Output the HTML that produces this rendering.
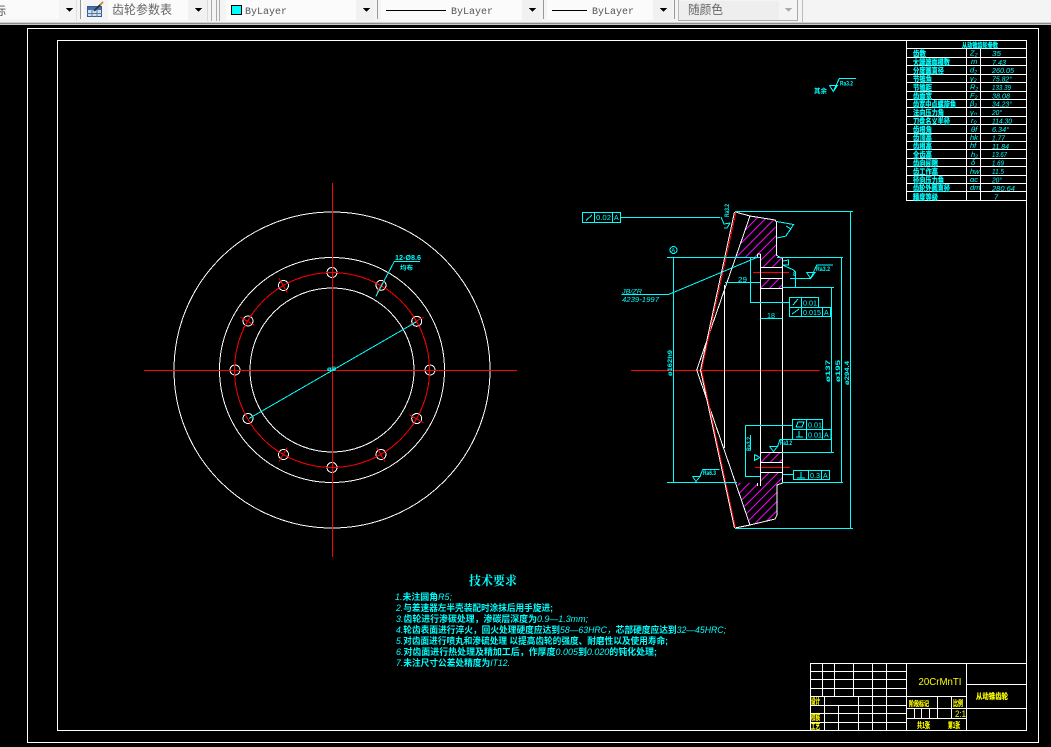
<!DOCTYPE html>
<html><head><meta charset="utf-8">
<style>
html,body{margin:0;padding:0;width:1051px;height:747px;overflow:hidden;background:#000}
svg{position:absolute;left:0;top:0;display:block}
text{font-family:"Liberation Sans","Noto Sans CJK SC",sans-serif}
.m{font-family:"Liberation Mono","Noto Sans CJK SC",monospace}
.s{font-family:"Noto Serif CJK SC","Liberation Serif",serif}
.c{fill:#0ff;font-size:8px}
.b{font-weight:700}
.y{fill:#ff0;font-size:8px;font-weight:700;stroke:#ff0;stroke-width:.2px}
.l{font-weight:400;font-style:italic;stroke:none}
</style></head><body>
<svg width="1051" height="747" viewBox="0 0 1051 747" xmlns="http://www.w3.org/2000/svg">
<defs>
<pattern id="h" width="6.500" height="6.500" patternUnits="userSpaceOnUse" patternTransform="rotate(-45)">
<rect width="6.500" height="1" fill="#f0f"/></pattern>
</defs>
<rect width="1051" height="747" fill="#000"/>

<!-- toolbar -->
<rect width="1051" height="22" fill="#f4f4f4"/>
<rect y="22" width="1051" height="1" fill="#d0d0d0"/>
<rect y="23" width="1051" height="1" fill="#8c8c8c"/>
<rect y="24" width="1051" height="1" fill="#c8c8c8"/>
<g shape-rendering="crispEdges">
<rect x="0" y="0" width="59" height="19" fill="#fafafa"/>
<rect x="76" y="0" width="1" height="21" fill="#e0e0e0"/>
<rect x="80" y="0" width="1" height="19" fill="#999"/>
<rect x="82" y="0" width="1" height="19" fill="#fff"/>
<rect x="108" y="0" width="99" height="20" fill="#fbfbfb"/>
<rect x="188" y="0" width="19" height="20" fill="#f1f1f1"/>
<rect x="207" y="0" width="1" height="21" fill="#d8d8d8"/>
<rect x="211" y="0" width="1" height="21" fill="#aaa"/>
<rect x="216" y="0" width="1" height="21" fill="#aaa"/>
<rect x="219" y="0" width="1" height="21" fill="#aaa"/>
<rect x="226" y="0" width="148" height="20" fill="#fbfbfb"/>
<rect x="356" y="0" width="18" height="20" fill="#f1f1f1"/>
<rect x="377" y="0" width="1" height="19" fill="#999"/>
<rect x="381" y="0" width="159" height="20" fill="#fbfbfb"/>
<rect x="522" y="0" width="18" height="20" fill="#f1f1f1"/>
<rect x="543" y="0" width="1" height="19" fill="#999"/>
<rect x="547" y="0" width="125" height="20" fill="#fbfbfb"/>
<rect x="653" y="0" width="19" height="20" fill="#f1f1f1"/>
<rect x="674" y="0" width="1" height="19" fill="#999"/>
<rect x="678" y="0" width="1" height="20" fill="#bbb"/>
<rect x="678" y="20" width="120" height="1" fill="#aaa"/>
<rect x="797" y="0" width="1" height="20" fill="#aaa"/>
<rect x="679" y="1" width="100" height="19" fill="#eee"/>
<rect x="802" y="0" width="1" height="22" fill="#bbb"/>
<!-- swatch -->
<rect x="231.500" y="5.500" width="10" height="9" fill="#0ff" stroke="#000"/>
<!-- lines -->
<rect x="386" y="10" width="60" height="1" fill="#000"/>
<rect x="552" y="10" width="35" height="1" fill="#000"/>
<!-- arrows -->
<polygon points="66,8 73,8 69.500,12" fill="#000"/>
<polygon points="195,8 202,8 198.500,12" fill="#000"/>
<polygon points="363,8 370,8 366.500,12" fill="#000"/>
<polygon points="529,8 536,8 532.500,12" fill="#000"/>
<polygon points="660,8 667,8 663.500,12" fill="#000"/>
<polygon points="785,8 792,8 788.500,12" fill="#aaa"/>
<!-- table icon -->
<rect x="87.500" y="6.500" width="14" height="10" fill="#cfe0f2" stroke="#3a5a8c"/>
<rect x="88" y="7" width="13" height="3" fill="#3f6fb0"/>
<path d="M87 13.500H102M92 7V17M97 7V17" stroke="#5a7aa8" fill="none"/>
<path d="M94 11L102 3" stroke="#333" stroke-width="2"/>
<path d="M100 5L103 2" stroke="#c98a2a" stroke-width="2"/>
</g>
<text x="-6" y="15" font-size="12" fill="#555">标</text>
<text x="112" y="14" font-size="12.500" fill="#666" textLength="60" lengthAdjust="spacingAndGlyphs">齿轮参数表</text>
<text class="m" x="245" y="14" font-size="10" fill="#555">ByLayer</text>
<text class="m" x="451" y="14" font-size="10" fill="#555">ByLayer</text>
<text class="m" x="592" y="14" font-size="10" fill="#555">ByLayer</text>
<text x="688" y="14" font-size="12.500" fill="#666" textLength="35" lengthAdjust="spacingAndGlyphs">随颜色</text>

<g shape-rendering="crispEdges" fill="none" stroke="#fff">
<!-- frames -->
<rect x="27.500" y="28.500" width="1011" height="714"/>
<rect x="57.500" y="40.500" width="969" height="690"/>

<!-- front view -->
<circle cx="332" cy="370" r="158"/>
<circle cx="332" cy="370" r="112.500"/>
<circle cx="332" cy="370" r="82"/>
<g>
<circle cx="430" cy="370" r="5"/><circle cx="416.700" cy="321.300" r="5"/><circle cx="381" cy="285.300" r="5"/><circle cx="332" cy="272.500" r="5"/><circle cx="283.500" cy="285.500" r="5"/><circle cx="248" cy="321" r="5"/><circle cx="235" cy="370" r="5"/><circle cx="248" cy="418.500" r="5"/><circle cx="283.500" cy="454.500" r="5"/><circle cx="332" cy="467.500" r="5"/><circle cx="381" cy="454.500" r="5"/><circle cx="416.700" cy="418.500" r="5"/>
</g>
</g>
<g shape-rendering="crispEdges" fill="none" stroke="#f00">
<circle cx="332" cy="370" r="97.500"/>
<path d="M144 370.500H517M332.500 183V557"/>
<path d="M631 370.500H820"/>
<path d="M753 272.500H789M755 467.500H790"/>
<path d="M409.500 325.250L423.300 317.250M412.400 314.350L420.400 328.150"/>
<path d="M376.750 292.500L384.750 278.700M373.850 281.600L387.650 289.600"/>
<path d="M287.250 292.500L279.250 278.700M276.350 289.600L290.150 281.600"/>
<path d="M254.500 325.250L240.700 317.250M243.600 328.150L251.600 314.350"/>
<path d="M409.500 414.750L423.300 422.750M420.400 411.850L412.400 425.650"/>
<path d="M376.750 447.500L384.750 461.300M387.650 450.400L373.850 458.400"/>
<path d="M287.250 447.500L279.250 461.300M276.350 450.400L290.150 458.400"/>
</g>

<!-- side view hatching -->
<g shape-rendering="crispEdges">
<polygon fill="url(#h)" points="750,216 775,220 776.700,255 782.500,258 782.500,267 760.500,267 760.500,254 757,254 757,258 736.700,258"/>
<rect fill="url(#h)" x="760.500" y="278" width="22" height="10"/>
<rect fill="url(#h)" x="760.500" y="452" width="22" height="10"/>
<polygon fill="url(#h)" points="750,525 775,519 776.700,515 776.700,485 782.300,483 782.300,473 760.300,473 760.300,486 757.300,486 757.300,483 737,483"/>
</g>
<g shape-rendering="crispEdges" fill="none" stroke="#fff">
<path d="M734.500 212L700.500 370L734.500 528"/>
<path d="M735 212L750 216L775 220L776.500 222L776.500 255L779 257L782.500 258V483L777 485V515L775 519L750 525L735 528"/>
<path d="M750 216L696.700 370L750 525"/>
<path d="M724.500 285V448M760.500 254V486M757.500 254H760.500M757.500 254V258M757.500 486V483"/>
<path d="M760.500 267.500H782.500M760.500 278.500H782.500M760.500 288.500H782.500M760.500 452.500H782.500M760.500 462.500H782.500M760.500 472.500H782.500"/>
</g>
<path shape-rendering="crispEdges" fill="none" stroke="#f00" d="M736 212L701.500 370L735.500 528"/>

<!-- cyan annotations -->
<g shape-rendering="crispEdges" fill="none" stroke="#0ff">
<path d="M249 418.500L416.700 321.700"/>
<path d="M375.700 296.700L394.300 261.500H420"/>
<!-- top FCF -->
<rect x="582.500" y="212.500" width="38" height="10"/>
<path d="M594.500 212.500V222.500M612.500 212.500V222.500M620.500 217.500H720M586 220.500L592 215"/>
<!-- dims -->
<path d="M735 211.500H853M850.500 212V528M735 528.500H853"/>
<path d="M777 257.500H843M841.500 258V482M782 482.500H843"/>
<path d="M782.500 287.500H834M831.500 288V452M782 452.500H834"/>
<path d="M667 257.500H760M673.500 257V482M667 482.500H737"/>
<circle cx="673.500" cy="250" r="3.500"/>
<path d="M621.500 294.500H668.500L758 257"/>
<path d="M725 282.500H760M760.500 318.500H782.500"/>
<!-- FCF 2 -->
<rect x="789.500" y="297.500" width="29" height="10"/>
<rect x="789.500" y="307.500" width="41" height="9"/>
<path d="M801.500 297.500V316.500M822.500 307.500V316.500M750.500 258V302.500H789.500M793 305L798 299M792 314L799 309"/>
<!-- surface right -->
<path d="M806.500 272.500H815L810.700 278.500L806.500 272.500M810.700 278.500L816.700 265H833M790 278.500H810.700"/>
<path d="M783 261L788.500 260V265H783M782.700 265L793.500 270L795.500 272V287.500"/>
<path d="M776.700 221.500L793.500 224.500L786 236L777 238M786 226L791 229L787 234"/>
<!-- tip mark -->
<path d="M721 217L724 224L730 223L727 228H724"/>
<!-- lower FCF -->
<rect x="792.500" y="419.500" width="30" height="10"/>
<rect x="792.500" y="429.500" width="38.500" height="10"/>
<path d="M806.500 419.500V439.500M822.500 429.500V439.500M745.500 425.500H792.500M745.500 425.500V476.500H760M796 427L798 422H804L802 427H796M799 431V437M796 437H803"/>
<path d="M754.500 454.500L760 457.500L754.500 460.500V454.500M769.500 446.500H777.500L773.500 451.500L769.500 446.500M777.500 446.500L780 439.500H792.500"/>
<rect x="793.500" y="470.500" width="36" height="9"/>
<path d="M808.500 470.500V479.500M821.500 470.500V479.500M782.500 474.500H793.500M801 472V478M797 478H805"/>
<path d="M692.500 476.500H700L696 481.500L692.500 476.500M700 476.500L702.700 469.500H719.500"/>
<!-- top note surface -->
<path d="M829.500 85.500H837.500L833.300 91.500L829.500 85.500M833.300 91.500L839.300 78.500H856"/>
</g>
<rect x="750" y="435" width="1" height="15" fill="#0ff"/>
<!-- cyan text -->
<text class="c" x="622" y="293.500" style="font-size:6px" textLength="20" lengthAdjust="spacingAndGlyphs" font-style="italic">JB/ZR</text>
<text class="c" x="622" y="302" style="font-size:7.500px" textLength="37" lengthAdjust="spacingAndGlyphs" font-style="italic">4239-1997</text>
<text class="c" x="596" y="220" style="font-size:7px" textLength="15" lengthAdjust="spacingAndGlyphs">0.02</text>
<text class="c" x="614" y="220" style="font-size:7px">A</text>
<text class="c" x="671.300" y="252.500" style="font-size:6px">A</text>
<text class="c" x="738" y="282" style="font-size:7px" textLength="9" lengthAdjust="spacingAndGlyphs">29</text>
<text class="c" x="767" y="318" style="font-size:7px" textLength="8" lengthAdjust="spacingAndGlyphs">18</text>
<text class="c" x="803" y="305.500" style="font-size:7px" textLength="14" lengthAdjust="spacingAndGlyphs">0.01</text>
<text class="c" x="803" y="315" style="font-size:7px" textLength="18" lengthAdjust="spacingAndGlyphs">0.015</text>
<text class="c" x="824" y="315" style="font-size:7px">A</text>
<text class="c" x="808" y="427.500" style="font-size:7px" textLength="14" lengthAdjust="spacingAndGlyphs">0.01</text>
<text class="c" x="808" y="437.500" style="font-size:7px" textLength="14" lengthAdjust="spacingAndGlyphs">0.01</text>
<text class="c" x="824" y="437.500" style="font-size:7px">A</text>
<text class="c" x="810" y="478" style="font-size:7px" textLength="10" lengthAdjust="spacingAndGlyphs">0.3</text>
<text class="c" x="823" y="478" style="font-size:7px">A</text>
<text class="c b" x="840" y="85.500" style="font-size:6px" textLength="13" lengthAdjust="spacingAndGlyphs">Ra3.2</text>
<text class="c b" x="816" y="271" style="font-size:6px" textLength="14" lengthAdjust="spacingAndGlyphs">Ra3.2</text>
<text class="c b" x="780" y="445" style="font-size:6px" textLength="12" lengthAdjust="spacingAndGlyphs">Ra3.2</text>
<text class="c b" x="703" y="475" style="font-size:6px" textLength="13" lengthAdjust="spacingAndGlyphs">Ra6.3</text>
<text class="c b" x="814" y="93" style="font-size:6.500px" textLength="13" lengthAdjust="spacingAndGlyphs">其余</text>
<text class="c b" x="327" y="371" style="font-size:6px" textLength="9" lengthAdjust="spacingAndGlyphs">ø8</text>
<text class="c b" x="395" y="260" style="font-size:7px" textLength="26" lengthAdjust="spacingAndGlyphs">12-Ø8.6</text>
<text class="c b" x="400" y="270" style="font-size:6px" textLength="13" lengthAdjust="spacingAndGlyphs">均布</text>
<text class="c b" x="793" y="276" style="font-size:6px">8</text>
<text class="c b" transform="translate(672 376) rotate(-90)" style="font-size:6.500px" textLength="26" lengthAdjust="spacingAndGlyphs">ø162h9</text>
<text class="c b" transform="translate(830 382) rotate(-90)" style="font-size:6.500px" textLength="22" lengthAdjust="spacingAndGlyphs">ø137</text>
<text class="c b" transform="translate(840 382) rotate(-90)" style="font-size:6.500px" textLength="22" lengthAdjust="spacingAndGlyphs">ø195</text>
<text class="c b" transform="translate(849 385) rotate(-90)" style="font-size:6.500px" textLength="24" lengthAdjust="spacingAndGlyphs">ø294.4</text>
<text class="c b" transform="translate(729 217) rotate(-90)" style="font-size:6px" textLength="13" lengthAdjust="spacingAndGlyphs">Ra3.2</text>
<text class="c b" transform="translate(751 451) rotate(-90)" style="font-size:6px" textLength="14" lengthAdjust="spacingAndGlyphs">Ra3.2</text>

<!-- tech requirements -->
<text class="s b" x="469" y="585" font-size="12.500" fill="#0ff" textLength="48" lengthAdjust="spacingAndGlyphs">技术要求</text>
<g fill="#0ff" font-size="9" font-weight="700">
<text x="395" y="600" textLength="57" lengthAdjust="spacingAndGlyphs"><tspan class="l">1.</tspan>未注圆角<tspan class="l">R5;</tspan></text>
<text x="396" y="611" textLength="157" lengthAdjust="spacingAndGlyphs"><tspan class="l">2.</tspan>与差速器左半壳装配时涂抹后用手旋进;</text>
<text x="396" y="622" textLength="192" lengthAdjust="spacingAndGlyphs"><tspan class="l">3.</tspan>齿轮进行渗碳处理，渗碳层深度为<tspan class="l">0.9—1.3mm;</tspan></text>
<text x="396" y="633" textLength="330" lengthAdjust="spacingAndGlyphs"><tspan class="l">4.</tspan>轮齿表面进行淬火，回火处理硬度应达到<tspan class="l">58—63HRC，</tspan>芯部硬度应达到<tspan class="l">32—45HRC;</tspan></text>
<text x="396" y="644" textLength="272" lengthAdjust="spacingAndGlyphs"><tspan class="l">5.</tspan>对齿面进行喷丸和渗硫处理 以提高齿轮的强度、耐磨性以及使用寿命;</text>
<text x="396" y="655" textLength="261" lengthAdjust="spacingAndGlyphs"><tspan class="l">6.</tspan>对齿面进行热处理及精加工后，作厚度<tspan class="l">0.005</tspan>到<tspan class="l">0.020</tspan>的钝化处理;</text>
<text x="396" y="666" textLength="114" lengthAdjust="spacingAndGlyphs"><tspan class="l">7.</tspan>未注尺寸公差处精度为<tspan class="l">IT12.</tspan></text>
</g>

<!-- parameter table -->
<g shape-rendering="crispEdges" fill="none" stroke="#fff">
<rect x="906.500" y="40.500" width="120" height="160"/>
<path d="M907 48.500H1026M907 57.500H1026M907 65.500H1026M907 74.500H1026M907 82.500H1026M907 91.500H1026M907 99.500H1026M907 107.500H1026M907 116.500H1026M907 124.500H1026M907 133.500H1026M907 141.500H1026M907 149.500H1026M907 158.500H1026M907 166.500H1026M907 175.500H1026M907 183.500H1026M907 191.500H1026"/>
<path d="M966.500 48.500V200.500M980.500 48.500V200.500"/>
</g>
<g fill="#0ff" font-size="8" font-weight="700" stroke="#0ff" stroke-width=".2">
<text x="962" y="47.500" font-size="7" textLength="36" lengthAdjust="spacingAndGlyphs">从动锥齿轮参数</text>
<text x="913" y="56.500" textLength="13" lengthAdjust="spacingAndGlyphs">齿数</text>
<text x="913" y="65" textLength="37" lengthAdjust="spacingAndGlyphs">大端端面模数</text>
<text x="913" y="73.500" textLength="31" lengthAdjust="spacingAndGlyphs">分度圆直径</text>
<text x="913" y="82" textLength="19" lengthAdjust="spacingAndGlyphs">节锥角</text>
<text x="913" y="90.500" textLength="19" lengthAdjust="spacingAndGlyphs">节锥距</text>
<text x="913" y="99" textLength="19" lengthAdjust="spacingAndGlyphs">齿面宽</text>
<text x="913" y="107" textLength="43" lengthAdjust="spacingAndGlyphs">齿宽中点螺旋角</text>
<text x="913" y="115.500" textLength="31" lengthAdjust="spacingAndGlyphs">法向压力角</text>
<text x="913" y="124" textLength="37" lengthAdjust="spacingAndGlyphs">刀盘名义半径</text>
<text x="913" y="132.500" textLength="19" lengthAdjust="spacingAndGlyphs">齿根角</text>
<text x="913" y="140.500" textLength="19" lengthAdjust="spacingAndGlyphs">齿顶高</text>
<text x="913" y="149" textLength="19" lengthAdjust="spacingAndGlyphs">齿根高</text>
<text x="913" y="157.500" textLength="19" lengthAdjust="spacingAndGlyphs">全齿高</text>
<text x="913" y="166" textLength="25" lengthAdjust="spacingAndGlyphs">齿向间隙</text>
<text x="913" y="174.500" textLength="25" lengthAdjust="spacingAndGlyphs">齿工作高</text>
<text x="913" y="183" textLength="31" lengthAdjust="spacingAndGlyphs">径向压力角</text>
<text x="913" y="191" textLength="37" lengthAdjust="spacingAndGlyphs">齿轮外圆直径</text>
<text x="913" y="200" textLength="25" lengthAdjust="spacingAndGlyphs">精度等级</text>
</g>
<g fill="#0ff" font-size="7.500" font-style="italic">
<text x="970" y="55.500">Z₂</text><text x="992" y="56" textLength="9" lengthAdjust="spacingAndGlyphs">35</text>
<text x="971" y="64">m</text><text x="992" y="65" textLength="14" lengthAdjust="spacingAndGlyphs">7.43</text>
<text x="970" y="72.500">d₂</text><text x="992" y="73" textLength="22" lengthAdjust="spacingAndGlyphs">260.05</text>
<text x="970" y="81">γ₂</text><text x="992" y="81.500" textLength="20" lengthAdjust="spacingAndGlyphs">75.82°</text>
<text x="970" y="89.500">R₂</text><text x="992" y="90" textLength="19" lengthAdjust="spacingAndGlyphs">133.39</text>
<text x="970" y="98">F₂</text><text x="992" y="98.500" textLength="18" lengthAdjust="spacingAndGlyphs">38.08</text>
<text x="970" y="106">β₂</text><text x="992" y="106.500" textLength="20" lengthAdjust="spacingAndGlyphs">34.23°</text>
<text x="970" y="115">γₙ</text><text x="992" y="115" textLength="10" lengthAdjust="spacingAndGlyphs">20°</text>
<text x="971" y="123">r₀</text><text x="992" y="123.500" textLength="20" lengthAdjust="spacingAndGlyphs">114.30</text>
<text x="971" y="132">θf</text><text x="992" y="132" textLength="17" lengthAdjust="spacingAndGlyphs">6.34°</text>
<text x="970" y="140">hk</text><text x="992" y="140.500" textLength="13" lengthAdjust="spacingAndGlyphs">1.77</text>
<text x="970" y="148">hf</text><text x="992" y="149" textLength="17" lengthAdjust="spacingAndGlyphs">11.84</text>
<text x="971" y="157">h₂</text><text x="992" y="157" textLength="15" lengthAdjust="spacingAndGlyphs">13.67</text>
<text x="971" y="165">δ</text><text x="992" y="165.500" textLength="12" lengthAdjust="spacingAndGlyphs">1.69</text>
<text x="970" y="174">hw</text><text x="992" y="174" textLength="12" lengthAdjust="spacingAndGlyphs">11.5</text>
<text x="970" y="182">αc</text><text x="992" y="182.500" textLength="10" lengthAdjust="spacingAndGlyphs">20°</text>
<text x="970" y="190">dm</text><text x="992" y="191" textLength="23" lengthAdjust="spacingAndGlyphs">280.64</text>
<text x="994" y="199.500">7</text>
</g>

<!-- title block -->
<g shape-rendering="crispEdges" fill="none" stroke="#fff">
<rect x="810.500" y="663.500" width="216" height="67"/>
<path d="M810.500 671.500H906.500M810.500 679.500H906.500M810.500 688.500H906.500M810.500 696.500H966.500M810.500 705.500H906.500M810.500 713.500H906.500M810.500 722.500H906.500"/>
<path d="M822.500 663.500V696.500M834.500 663.500V696.500M853.500 663.500V696.500M872.500 663.500V730.500M886.500 663.500V730.500M824.500 696.500V730.500M838.500 705.500V730.500M858.500 696.500V730.500"/>
<path d="M906.500 663.500V730.500M966.500 663.500V730.500"/>
<path d="M966.500 684.500H1026.500M966.500 708.500H1026.500"/>
<path d="M906.500 708.500H966.500M906.500 718.500H966.500M914.500 708.500V718.500M921.500 708.500V718.500M929.500 708.500V718.500M937.500 696.500V718.500M951.500 696.500V718.500"/>
</g>
<text x="918.500" y="685" font-size="10.500" fill="#ff0" textLength="43" lengthAdjust="spacingAndGlyphs">20CrMnTI</text>
<text class="y" x="976" y="699" textLength="32" lengthAdjust="spacingAndGlyphs">从动锥齿轮</text>
<text class="y" x="811" y="704" textLength="9" lengthAdjust="spacingAndGlyphs">设计</text>
<text class="y" x="811" y="720" textLength="9" lengthAdjust="spacingAndGlyphs">校核</text>
<text class="y" x="811" y="729" textLength="9" lengthAdjust="spacingAndGlyphs">工艺</text>
<text class="y" x="909" y="706" style="font-size:7px" textLength="20" lengthAdjust="spacingAndGlyphs">阶段标记</text>
<text class="y" x="953" y="706" textLength="10" lengthAdjust="spacingAndGlyphs">比例</text>
<text x="955" y="717" font-size="9" fill="#ff0" textLength="11" lengthAdjust="spacingAndGlyphs">2:1</text>
<text class="y" x="917" y="728" textLength="13" lengthAdjust="spacingAndGlyphs">共1张</text>
<text class="y" x="948" y="728" textLength="12" lengthAdjust="spacingAndGlyphs">第1张</text>
</svg>
</body></html>
